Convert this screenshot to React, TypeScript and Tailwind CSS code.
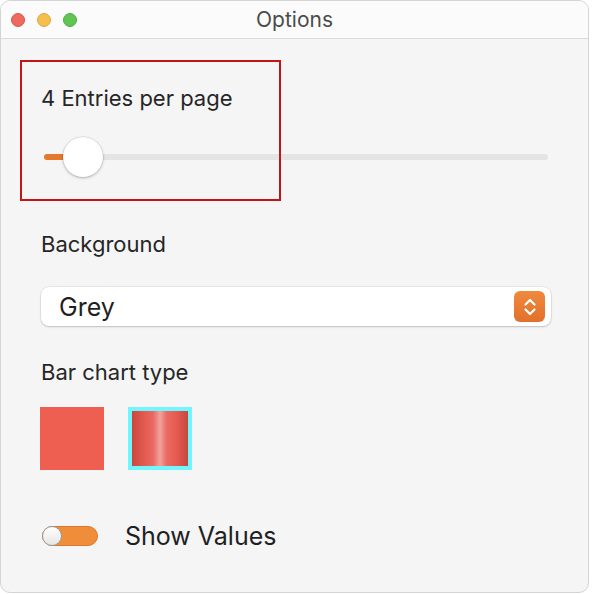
export default function App() {
  return (
    <div className="w-[592px] h-[594px] bg-white" style={{ fontFamily: "Inter, 'Liberation Sans', sans-serif" }}>
      <div className="relative w-[589px] h-[593px] rounded-[10px] border border-[#d4d4d4] bg-[#f5f5f5] overflow-hidden">
        {/* title bar */}
        <div className="relative h-[38px] bg-[#fbfbfb] border-b border-[#dadada] flex items-center">
          <div className="flex items-center gap-[12px] pl-[10px]">
            <span className="w-[14px] h-[14px] rounded-full bg-[#ee6a5f] border border-[#d9574d]" />
            <span className="w-[14px] h-[14px] rounded-full bg-[#f5bf4f] border border-[#dea93b]" />
            <span className="w-[14px] h-[14px] rounded-full bg-[#61c554] border border-[#4fae43]" />
          </div>
          <div className="absolute inset-0 flex items-center justify-center text-[21px] text-[#4b4b4b]">Options</div>
        </div>

        <div className="px-[40px] text-[#262626]">
          {/* entries slider */}
          <div className="pt-[47px] text-[22px] leading-[24px]">4 Entries per page</div>
          <div className="relative mt-[27px] h-[40px] flex items-center">
            <div className="ml-[3px] w-[504px] h-[6px] rounded-full bg-[#e4e4e4]">
              <div className="w-[22px] h-[6px] rounded-full bg-[#e5782c]" />
            </div>
            <div className="absolute left-[22px] top-0 w-[40px] h-[40px] rounded-full bg-white shadow-[0_0_0_0.5px_rgba(0,0,0,0.12),0_1px_3px_rgba(0,0,0,0.25)]" />
          </div>

          {/* background */}
          <div className="mt-[55px] text-[22px] leading-[24px]">Background</div>
          <div className="mt-[31px] w-[510px] h-[39px] rounded-[8px] bg-white shadow-[0_0_0_0.5px_rgba(0,0,0,0.1),0_1px_2px_rgba(0,0,0,0.18)] flex items-center justify-between pl-[18px] pr-[6px]">
            <span className="text-[25px] leading-[28px] text-[#1f1f1f]">Grey</span>
            <span className="w-[31px] h-[31px] rounded-[6px] bg-gradient-to-b from-[#ee8a3d] to-[#e2702a] flex items-center justify-center">
              <svg width="14" height="20" viewBox="0 0 14 20" fill="none" stroke="white" strokeWidth="2.2" strokeLinecap="round" strokeLinejoin="round">
                <path d="M2.5 7.5 7 3l4.5 4.5" />
                <path d="M2.5 12.5 7 17l4.5-4.5" />
              </svg>
            </span>
          </div>

          {/* bar chart type */}
          <div className="mt-[34px] text-[22px] leading-[24px]">Bar chart type</div>
          <div className="mt-[23px] -ml-px flex gap-[24px]">
            <div className="w-[64px] h-[63px] bg-[#ee5f51]" />
            <div className="w-[64px] h-[63px] border-[4px] border-[#6ff6ff] bg-[linear-gradient(90deg,#c9463f_0%,#e45a50_22%,#ea6b62_38%,#f2a3a0_50%,#ea6b62_62%,#e45a50_80%,#c34840_100%)]" />
          </div>

          {/* toggle */}
          <div className="mt-[52px] flex items-center">
            <div className="relative ml-[1px] w-[56px] h-[20px] rounded-full bg-[#ef8d3a] border border-[#d9792c]">
              <div className="absolute -left-[1px] -top-[1px] w-[20px] h-[20px] rounded-full bg-gradient-to-b from-white to-[#e6e6e6] border border-[#9a9a9a]" />
            </div>
            <span className="ml-[27px] text-[25px] leading-[28px] text-[#1f1f1f]">Show Values</span>
          </div>
        </div>

        {/* highlight box */}
        <div className="absolute left-[19px] top-[59px] w-[261px] h-[141px] border-2 border-[#c41414]" />
      </div>
    </div>
  );
}
